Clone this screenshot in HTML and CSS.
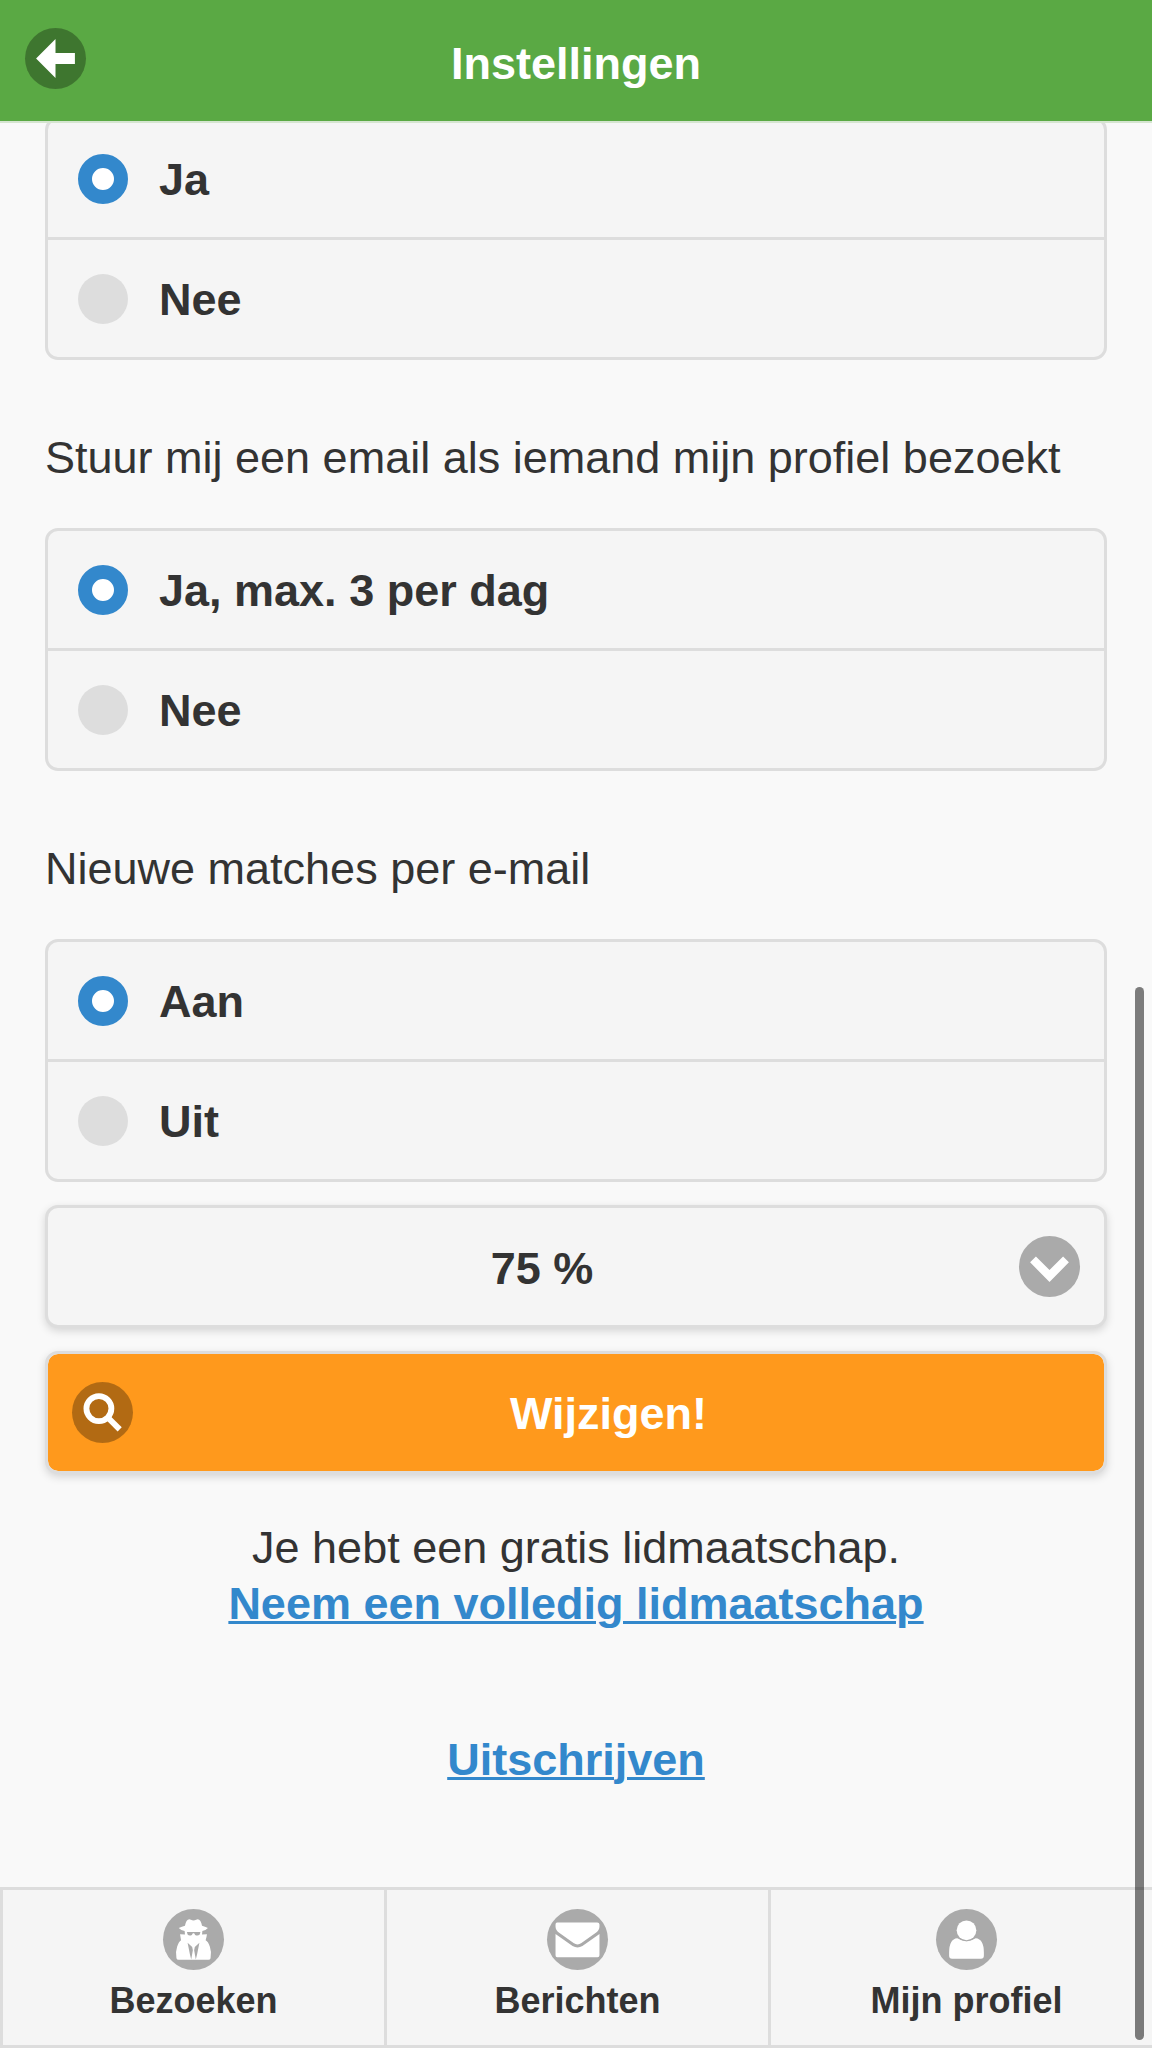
FILE: index.html
```html
<!DOCTYPE html>
<html lang="nl">
<head>
  <meta charset="utf-8">
  <meta name="viewport" content="width=device-width, initial-scale=1">
  <title>Instellingen</title>
  <link rel="stylesheet" href="styles.css">
</head>
<body>
  <header class="header">
    <button class="disc disc-dark back" type="button" aria-label="Terug">
      <svg viewBox="0 0 22 22" aria-hidden="true"><path d="M18 9H11V4L4 11L11 18V13H18Z"/></svg>
    </button>
    <h1 class="title">Instellingen</h1>
  </header>

  <main class="content">
    <form class="form">
      <fieldset class="group">
        <div class="options">
          <label class="option"><input type="radio" name="email" checked><span class="option-text">Ja</span></label>
          <label class="option"><input type="radio" name="email"><span class="option-text">Nee</span></label>
        </div>
      </fieldset>

      <fieldset class="group">
        <legend class="legend">Stuur mij een email als iemand mijn profiel bezoekt</legend>
        <div class="options">
          <label class="option"><input type="radio" name="visit" checked><span class="option-text">Ja, max. 3 per dag</span></label>
          <label class="option"><input type="radio" name="visit"><span class="option-text">Nee</span></label>
        </div>
      </fieldset>

      <fieldset class="group">
        <legend class="legend">Nieuwe matches per e-mail</legend>
        <div class="options">
          <label class="option"><input type="radio" name="matches" checked><span class="option-text">Aan</span></label>
          <label class="option"><input type="radio" name="matches"><span class="option-text">Uit</span></label>
        </div>
      </fieldset>

      <div class="select-wrap">
        <select class="select" aria-label="Matchpercentage">
          <option>75 %</option>
        </select>
        <span class="disc select-icon">
          <svg viewBox="0 0 22 22" aria-hidden="true"><path d="M15.9 7.4L11 12.3L6.1 7.4L4 9.5L11 16.6L18 9.5Z"/></svg>
        </span>
      </div>

      <button class="submit" type="button">
        <span class="disc disc-dark">
          <svg viewBox="0 0 22 22" aria-hidden="true"><g fill="none" stroke="#fff" stroke-width="2.1"><circle cx="9.7" cy="9.6" r="4.5"/><path d="M12.9 12.8L17.2 17.1"/></g></svg>
        </span>
        <span class="submit-text">Wijzigen!</span>
      </button>
    </form>

    <p class="membership">Je hebt een gratis lidmaatschap.<br><a class="link" href="#lidmaatschap">Neem een volledig lidmaatschap</a></p>
    <p class="unsubscribe"><a class="link" href="#uitschrijven">Uitschrijven</a></p>
  </main>

  <nav class="tabs">
    <a class="tab" href="#bezoeken">
      <span class="disc">
        <svg viewBox="0 0 186 186" aria-hidden="true">
          <path d="M48 58Q58 53 67 51Q70 36 76 33Q80 30 85 33Q93 37 101 33Q106 30 110 33Q116 36 119 51Q128 53 137 58Q130 66 120 67L119 78L134 77Q133 86 130 95Q138 99 143 115Q149 132 145 150Q144 155 138 155H48Q42 155 41 150Q37 132 43 115Q48 99 55 95L52 77L67 78L66 67Q55 66 48 58Z"/>
          <path class="cut" d="M73 70H114L112 78Q106 83 98 79L95 74H91L88 79Q80 83 75 78ZM75 103L89 116L91 126L86 154L82 138ZM111 103L97 116L95 126L100 154L104 138Z"/>
        </svg>
      </span>
      Bezoeken
    </a>
    <a class="tab" href="#berichten">
      <span class="disc">
        <svg viewBox="0 0 186 186" aria-hidden="true">
          <path d="M31 41H153Q160 41 160 47V53Q160 64 150 72L105 104Q93 113 81 104L36 72Q26 64 26 53V47Q26 41 31 41Z"/>
          <path d="M26 76L78 113Q93 122 108 113L160 76V141Q160 147 154 147H31Q26 147 26 141Z"/>
        </svg>
      </span>
      Berichten
    </a>
    <a class="tab" href="#profiel">
      <span class="disc">
        <svg viewBox="0 0 186 186" aria-hidden="true">
          <path d="M40 133Q40 91 65 89Q93 107 121 89Q146 91 146 133V142Q146 152 137 152H49Q40 152 40 142Z"/>
          <circle class="cut" cx="93" cy="65" r="33"/>
          <circle cx="93" cy="65" r="30"/>
        </svg>
      </span>
      Mijn profiel
    </a>
  </nav>
  <div class="scroll-thumb"></div>
</body>
</html>
```
FILE: styles.css
```css
* {
  box-sizing: border-box;
}

body {
  display: flex;
  flex-direction: column;
  min-height: 100vh;
  margin: 0;
  background: #f9f9f9;
  color: #333;
  font: 45px/56px "Liberation Sans", Arial, Helvetica, sans-serif;
}

.disc {
  display: flex;
  flex: none;
  width: 61px;
  height: 61px;
  padding: 0;
  border: 0;
  border-radius: 50%;
  background: #aaa;
}

.disc-dark {
  background: rgba(0, 0, 0, 0.3);
}

.disc svg {
  width: 100%;
  height: 100%;
  fill: #fff;
}

.disc .cut {
  fill: #aaa;
}

/* Top bar, stays above the scrolling content */
.header {
  position: fixed;
  z-index: 2;
  top: 0;
  left: 0;
  right: 0;
  display: grid;
  grid-template-columns: 61px 1fr 61px;
  align-items: start;
  padding: 28px 25px 29px;
  border-bottom: 2px solid #d5e5d0;
  background: #5aa944;
  background-clip: padding-box;
}

.title {
  margin: 0;
  padding-top: 8px;
  color: #fff;
  font-size: 45px;
  line-height: 56px;
  text-align: center;
}

.content {
  flex: 1;
  padding: 117px 45px 0;
}

.group {
  min-width: 0;
  margin: 0;
  padding: 0;
  border: 0;
}

.legend {
  padding: 70px 0 42px;
}

.options {
  border: 3px solid #ddd;
  border-radius: 13px;
  background: #f5f5f5;
}

.option {
  display: flex;
  align-items: center;
  gap: 31px;
  height: 117px;
  padding-left: 30px;
  font-weight: bold;
}

.option + .option {
  height: 120px;
  border-top: 3px solid #ddd;
}

.option input {
  appearance: none;
  width: 50px;
  height: 50px;
  margin: 0;
  border-radius: 50%;
  background: #ddd;
}

.option input:checked {
  border: 14px solid #38c;
  background: #fff;
}

.option-text {
  padding-top: 2px;
}

.select-wrap {
  position: relative;
  margin-top: 23px;
}

.select,
.submit {
  display: block;
  width: 100%;
  height: 123px;
  border: 3px solid #ddd;
  border-radius: 13px;
  box-shadow: 0 3px 8px rgba(0, 0, 0, 0.15);
  font: bold 45px/56px "Liberation Sans", Arial, Helvetica, sans-serif;
}

.select {
  appearance: none;
  padding: 4px 101px 0 33px;
  background: #f5f5f5;
  color: #333;
  text-align: center;
  text-align-last: center;
}

.select-icon {
  position: absolute;
  top: 31px;
  right: 27px;
  pointer-events: none;
}

.submit {
  display: flex;
  align-items: center;
  margin-top: 23px;
  padding: 0 20px 0 24px;
  background: #ff991c;
  background-clip: padding-box;
  color: #fff;
}

.submit-text {
  flex: 1;
  padding-top: 2px;
}

.membership,
.unsubscribe {
  margin: 46px 0 0;
  text-align: center;
}

.unsubscribe {
  margin-top: 100px;
}

.link {
  color: #38c;
  font-weight: bold;
  text-decoration-thickness: 3px;
}

.tabs {
  display: grid;
  grid-template-columns: repeat(3, 1fr);
  border-top: 3px solid #ddd;
  border-bottom: 3px solid #ddd;
  background: #f5f5f5;
}

.tab {
  display: flex;
  flex-direction: column;
  align-items: center;
  gap: 9px;
  padding: 19px 0 22px;
  border-left: 3px solid #ddd;
  color: #333;
  font-size: 36px;
  font-weight: bold;
  line-height: 44px;
  text-decoration: none;
}

.tab:last-child {
  padding-left: 10px;
}

.scroll-thumb {
  position: fixed;
  z-index: 3;
  right: 8px;
  bottom: 8px;
  width: 9px;
  height: 51.4vh;
  border-radius: 5px;
  background: rgba(0, 0, 0, 0.5);
}
```
